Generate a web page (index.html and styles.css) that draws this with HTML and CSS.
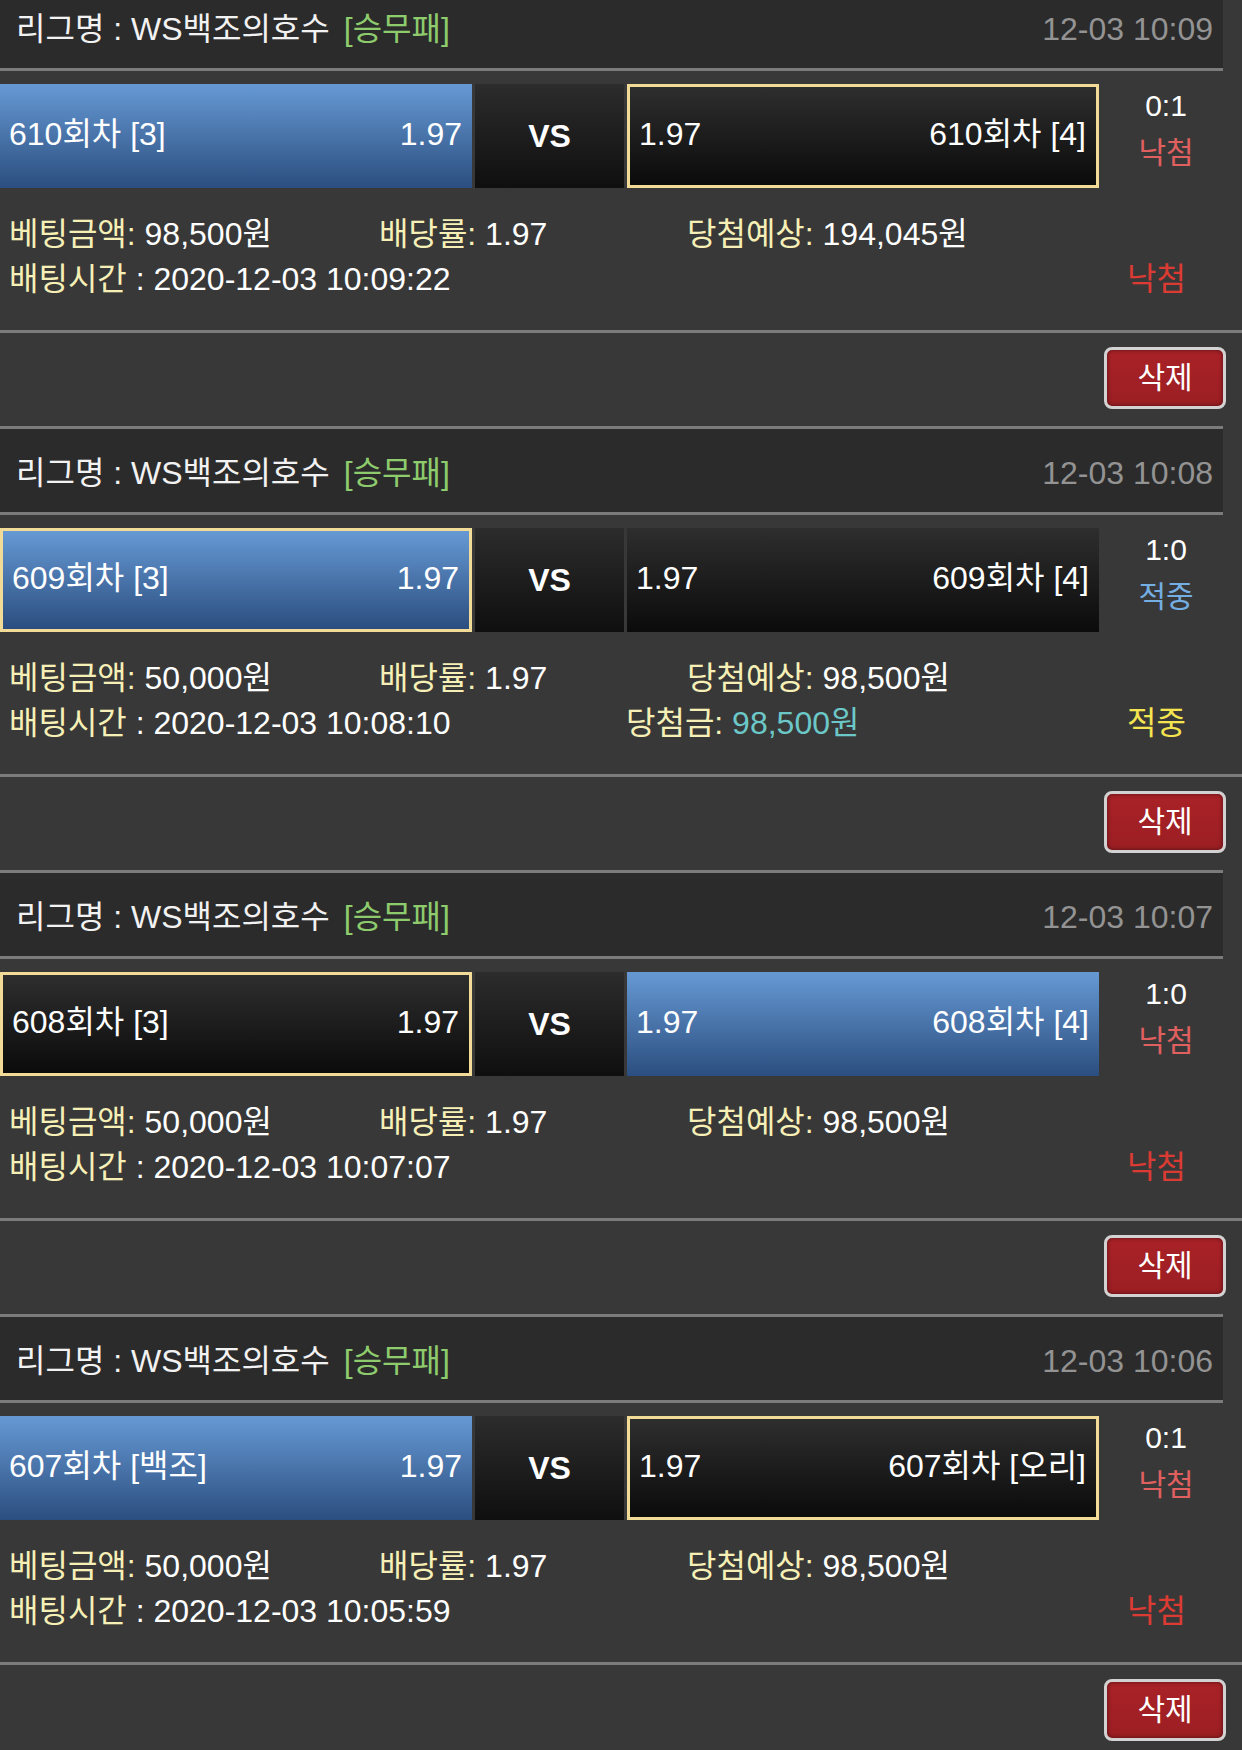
FILE: index.html
```html
<!DOCTYPE html>
<html lang="ko">
<head>
<meta charset="utf-8">
<title>배팅내역</title>
<link rel="stylesheet" href="styles.css">
</head>
<body>
<div class="list">

  <section class="bet">
    <div class="bet-head">
      <div class="league">리그명 : WS백조의호수<span class="type">[승무패]</span></div>
      <div class="date">12-03 10:09</div>
    </div>
    <div class="match">
      <div class="team blue"><span>610회차 [3]</span><span>1.97</span></div>
      <div class="vs">VS</div>
      <div class="team dark sel"><span>1.97</span><span>610회차 [4]</span></div>
      <div class="score"><div>0:1</div><div class="res res-lose">낙첨</div></div>
    </div>
    <div class="info">
      <div class="info-row">
        <div class="c1"><span class="lbl">베팅금액:</span> 98,500원</div>
        <div class="c2"><span class="lbl">배당률:</span> 1.97</div>
        <div class="c3"><span class="lbl">당첨예상:</span> 194,045원</div>
      </div>
      <div class="info-row">
        <div class="c12"><span class="lbl">배팅시간</span> : 2020-12-03 10:09:22</div>
        <div class="cwin"></div>
        <div class="result lose">낙첨</div>
      </div>
    </div>
    <div class="actions"><button class="del" type="button">삭제</button></div>
  </section>

  <section class="bet">
    <div class="bet-head">
      <div class="league">리그명 : WS백조의호수<span class="type">[승무패]</span></div>
      <div class="date">12-03 10:08</div>
    </div>
    <div class="match">
      <div class="team blue sel"><span>609회차 [3]</span><span>1.97</span></div>
      <div class="vs">VS</div>
      <div class="team dark"><span>1.97</span><span>609회차 [4]</span></div>
      <div class="score"><div>1:0</div><div class="res res-win">적중</div></div>
    </div>
    <div class="info">
      <div class="info-row">
        <div class="c1"><span class="lbl">베팅금액:</span> 50,000원</div>
        <div class="c2"><span class="lbl">배당률:</span> 1.97</div>
        <div class="c3"><span class="lbl">당첨예상:</span> 98,500원</div>
      </div>
      <div class="info-row">
        <div class="c12"><span class="lbl">배팅시간</span> : 2020-12-03 10:08:10</div>
        <div class="cwin"><span class="lbl">당첨금:</span> <span class="won">98,500원</span></div>
        <div class="result win">적중</div>
      </div>
    </div>
    <div class="actions"><button class="del" type="button">삭제</button></div>
  </section>

  <section class="bet">
    <div class="bet-head">
      <div class="league">리그명 : WS백조의호수<span class="type">[승무패]</span></div>
      <div class="date">12-03 10:07</div>
    </div>
    <div class="match">
      <div class="team dark sel"><span>608회차 [3]</span><span>1.97</span></div>
      <div class="vs">VS</div>
      <div class="team blue"><span>1.97</span><span>608회차 [4]</span></div>
      <div class="score"><div>1:0</div><div class="res res-lose">낙첨</div></div>
    </div>
    <div class="info">
      <div class="info-row">
        <div class="c1"><span class="lbl">베팅금액:</span> 50,000원</div>
        <div class="c2"><span class="lbl">배당률:</span> 1.97</div>
        <div class="c3"><span class="lbl">당첨예상:</span> 98,500원</div>
      </div>
      <div class="info-row">
        <div class="c12"><span class="lbl">배팅시간</span> : 2020-12-03 10:07:07</div>
        <div class="cwin"></div>
        <div class="result lose">낙첨</div>
      </div>
    </div>
    <div class="actions"><button class="del" type="button">삭제</button></div>
  </section>

  <section class="bet">
    <div class="bet-head">
      <div class="league">리그명 : WS백조의호수<span class="type">[승무패]</span></div>
      <div class="date">12-03 10:06</div>
    </div>
    <div class="match">
      <div class="team blue"><span>607회차 [백조]</span><span>1.97</span></div>
      <div class="vs">VS</div>
      <div class="team dark sel"><span>1.97</span><span>607회차 [오리]</span></div>
      <div class="score"><div>0:1</div><div class="res res-lose">낙첨</div></div>
    </div>
    <div class="info">
      <div class="info-row">
        <div class="c1"><span class="lbl">베팅금액:</span> 50,000원</div>
        <div class="c2"><span class="lbl">배당률:</span> 1.97</div>
        <div class="c3"><span class="lbl">당첨예상:</span> 98,500원</div>
      </div>
      <div class="info-row">
        <div class="c12"><span class="lbl">배팅시간</span> : 2020-12-03 10:05:59</div>
        <div class="cwin"></div>
        <div class="result lose">낙첨</div>
      </div>
    </div>
    <div class="actions"><button class="del" type="button">삭제</button></div>
  </section>

</div>
</body>
</html>
```

FILE: styles.css
```css
* { box-sizing: border-box; }

html, body {
  margin: 0;
  padding: 0;
}

body {
  width: 1242px;
  height: 1750px;
  overflow: hidden;
  background: #383838;
  color: #ffffff;
  font-family: "Liberation Sans", "Noto Sans CJK KR", sans-serif;
  font-size: 32px;
  line-height: 40px;
}

.list {
  margin-top: -18px;
}

/* header */
.bet-head {
  width: 1223px;
  height: 89px;
  display: flex;
  align-items: center;
  justify-content: space-between;
  padding: 5px 10px 0 16px;
  background: #2b2b2b;
  border-top: 3px solid #7b7b7b;
  border-bottom: 3px solid #7b7b7b;
  white-space: nowrap;
}

.league { color: #f2f2f2; }
.type { color: #8dcb6d; margin-left: 14px; }
.date { color: #939393; }

/* match row */
.match {
  display: grid;
  grid-template-columns: 472px 149px 472px 128px;
  column-gap: 3px;
  height: 104px;
  margin-top: 13px;
}

.team {
  display: flex;
  align-items: center;
  justify-content: space-between;
  padding: 0 10px 4px 9px;
  white-space: nowrap;
}

.blue { background: linear-gradient(#6699d4, #2b4e7f); }
.dark { background: linear-gradient(#2e2e2e, #0b0b0b); }
.sel { border: 3px solid #f2db97; }

.vs {
  display: flex;
  align-items: center;
  justify-content: center;
  font-weight: bold;
  background: linear-gradient(#2c2c2c, #0f0f0f);
}

.score {
  display: flex;
  flex-direction: column;
  align-items: center;
  font-size: 30px;
  line-height: 44px;
}

.res { margin-top: 3px; }
.res-lose { color: #e06060; }
.res-win { color: #74aee3; }

/* info */
.info {
  height: 145px;
  padding-top: 23px;
  border-bottom: 3px solid #7b7b7b;
}

.info-row {
  display: flex;
  align-items: center;
  height: 45px;
  padding-left: 9px;
  white-space: nowrap;
}

.lbl { color: #f6f0b7; }
.won { color: #6cc8c8; }

.c1 { width: 370px; }
.c2 { width: 308px; }
.c12 { width: 617px; }
.cwin { flex: 1; }

.result {
  padding-right: 56px;
}
.lose { color: #dc3b33; }
.win { color: #f4e450; }

/* actions */
.actions {
  display: flex;
  justify-content: flex-end;
  height: 93px;
  padding: 14px 16px 0 0;
}

.del {
  width: 122px;
  height: 62px;
  padding: 0;
  border: 3px solid #d2d2d2;
  border-radius: 8px;
  background: linear-gradient(#a92227, #9b1e23);
  box-shadow: inset 0 0 4px rgba(0, 0, 0, 0.5);
  color: #ffffff;
  font-family: "Liberation Sans", "Noto Sans CJK KR", sans-serif;
  font-size: 30px;
  line-height: 40px;
}
```
